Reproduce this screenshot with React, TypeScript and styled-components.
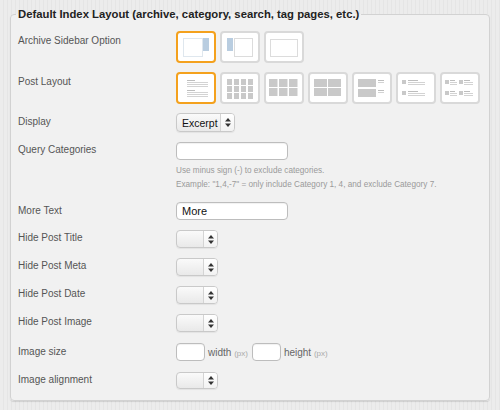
import React from "react"
import styled, {createGlobalStyle} from "styled-components"

const GlobalStyle = createGlobalStyle`
html, body {
  margin : 0;
  padding : 0;
}
body {
  width : 500px;
  height : 410px;
  overflow : hidden;
  font-family : "Liberation Sans", Arial, sans-serif;
  background : repeating-linear-gradient(90deg, #ececec 0px, #ececec 3px, #e5e5e5 3px, #e5e5e5 4px);
}
`

const Panel = styled.fieldset`
margin : 6px 0 0 10px;
width : 480px;
box-sizing : border-box;
border : 1px solid #d2d2d2;
border-radius : 4px;
background-color : #f1f1f1;
box-shadow : 0 1px 1px rgba(0,0,0,0.12);
padding : 9px 7px 11px 7px;
`

const Legend = styled.legend`
font-size : 11.3px;
line-height : 16px;
font-weight : bold;
color : #222;
padding : 0 2px;
margin-left : -2px;
`

interface rowProp {
  mt?: number;
}

const Row = styled.div<rowProp>`
display : grid;
grid-template-columns : 158px 1fr;
align-items : start;
margin-top : ${props => props.mt ?? 10}px;
&:first-of-type {
  margin-top : 0;
}
`

const Label = styled.div<{pad?: number}>`
font-size : 10px;
line-height : 14px;
color : #555;
padding-top : ${props => props.pad ?? 2}px;
`

// image option pickers
const Choices = styled.div`
display : flex;
gap : 4px;
`

const Choice = styled.div<{selected?: boolean}>`
width : 40px;
height : 32px;
box-sizing : border-box;
border : 2px solid ${props => props.selected ? "#f4a11d" : "#d9d9d9"};
border-radius : 4px;
background-color : #fff;
svg {
  display : block;
}
`

const Grid = ({xs, ys, w, h}: {xs: number[], ys: number[], w: number, h: number}) => (
  <>
    {ys.map(y => xs.map(x => <rect key={x + "-" + y} x={x} y={y} width={w} height={h} fill="#c9c9c9" />))}
  </>
)

const Lines = ({x, y, w, n, first}: {x: number, y: number, w: number, n: number, first?: number}) => (
  <>
    {Array.from({length: n}).map((_, i) => (
      <rect key={i} x={x} y={y + i * 2} width={i === 0 && first ? first : w} height={1} fill={i === 0 ? "#bdbdbd" : "#d3d3d3"} />
    ))}
  </>
)

const sidebarIcons = [
  <>
    <rect x={5.5} y={5.5} width={19} height={18} fill="#fff" stroke="#dfe7ee" />
    <rect x={25} y={5} width={6} height={13} fill="#b9cde0" />
  </>,
  <>
    <rect x={5} y={5} width={6} height={13} fill="#b9cde0" />
    <rect x={12.5} y={5.5} width={18} height={18} fill="#fff" stroke="#dcdcdc" />
  </>,
  <rect x={4.5} y={6.5} width={27} height={17} fill="#fff" stroke="#dcdcdc" />,
]

const postIcons = [
  <>
    <Lines x={9} y={6} w={21} n={4} first={8} />
    <Lines x={9} y={16} w={21} n={4} first={8} />
  </>,
  <Grid xs={[5, 12, 19, 26]} ys={[5, 12, 19]} w={5} h={6} />,
  <Grid xs={[3, 13, 23]} ys={[5, 14]} w={8.5} h={8} />,
  <Grid xs={[4, 18]} ys={[5, 14]} w={13} h={8} />,
  <>
    <Grid xs={[4]} ys={[5, 15]} w={18} h={8} />
    <Lines x={24} y={6} w={6} n={2} />
    <Lines x={24} y={16} w={6} n={2} />
  </>,
  <>
    <Grid xs={[4]} ys={[6, 17]} w={4} h={4} />
    <Lines x={10} y={6} w={17} n={3} first={10} />
    <Lines x={10} y={17} w={17} n={3} first={10} />
  </>,
  <>
    <Grid xs={[3, 17]} ys={[6, 17]} w={4} h={4} />
    <Lines x={8} y={6} w={7} n={3} first={5} />
    <Lines x={22} y={6} w={9} n={3} first={6} />
    <Lines x={8} y={17} w={7} n={3} first={5} />
    <Lines x={22} y={17} w={9} n={3} first={6} />
  </>,
]

const Picker = ({icons, selected}: {icons: React.ReactNode[], selected: number}) => (
  <Choices>
    {icons.map((icon, i) => (
      <Choice key={i} selected={i === selected}>
        <svg width="36" height="28" viewBox="0 0 36 28">{icon}</svg>
      </Choice>
    ))}
  </Choices>
)

// mac style select
const SelectBox = styled.div<{w: number, h?: number}>`
display : flex;
width : ${props => props.w}px;
height : ${props => props.h ?? 18}px;
box-sizing : border-box;
border : 1px solid #c9c9c9;
border-radius : 4px;
background : linear-gradient(#fafafa, #e9e9e9);
box-shadow : 0 1px 1px rgba(0,0,0,0.06);
overflow : hidden;
`

const SelectValue = styled.div`
flex : 1;
padding-left : 5px;
font-size : 10.5px;
display : flex;
align-items : center;
color : #111;
border-right : 1px solid #d4d4d4;
white-space : nowrap;
`

const SelectArrow = styled.div`
width : 13px;
display : flex;
align-items : center;
justify-content : center;
background : linear-gradient(#ffffff, #f2f2f2);
`

const Select = ({w, h, value}: {w: number, h?: number, value?: string}) => (
  <SelectBox w={w} h={h}>
    <SelectValue>{value}</SelectValue>
    <SelectArrow>
      <svg width="6" height="9" viewBox="0 0 6 9">
        <path d="M3 0 L6 3.5 L0 3.5 Z" fill="#333" />
        <path d="M0 5.5 L6 5.5 L3 9 Z" fill="#333" />
      </svg>
    </SelectArrow>
  </SelectBox>
)

const Input = styled.input<{w: number}>`
display : block;
width : ${props => props.w}px;
height : 18px;
box-sizing : border-box;
margin : 0;
border : 1px solid #bdbdbd;
border-radius : 4px;
background-color : #fff;
box-shadow : inset 0 1px 1px rgba(0,0,0,0.06);
padding : 0 5px;
font-family : "Liberation Sans", Arial, sans-serif;
font-size : 11px;
color : #111;
outline : none;
`

const Help = styled.div`
margin-top : 4px;
font-size : 8.2px;
line-height : 14px;
color : #9a9a9a;
`

const Inline = styled.div`
display : flex;
align-items : center;
gap : 3px;
`

const Unit = styled.span`
font-size : 10px;
color : #666;
margin-right : 1px;
small {
  font-size : 8px;
  color : #aaa;
}
`

function App() {
  return (
    <>
      <GlobalStyle />
      <Panel>
        <Legend>Default Index Layout (archive, category, search, tag pages, etc.)</Legend>
        <Row>
          <Label pad={3}>Archive Sidebar Option</Label>
          <Picker icons={sidebarIcons} selected={0} />
        </Row>
        <Row mt={9}>
          <Label pad={3}>Post Layout</Label>
          <Picker icons={postIcons} selected={0} />
        </Row>
        <Row mt={9}>
          <Label>Display</Label>
          <Select w={59} h={19} value="Excerpt" />
        </Row>
        <Row>
          <Label pad={1}>Query Categories</Label>
          <div>
            <Input w={112} />
            <Help>
              Use minus sign (-) to exclude categories.<br />
              Example: "1,4,-7" = only include Category 1, 4, and exclude Category 7.
            </Help>
          </div>
        </Row>
        <Row>
          <Label>More Text</Label>
          <Input w={112} defaultValue="More" />
        </Row>
        <Row>
          <Label pad={1}>Hide Post Title</Label>
          <Select w={42} />
        </Row>
        <Row>
          <Label pad={1}>Hide Post Meta</Label>
          <Select w={42} />
        </Row>
        <Row>
          <Label pad={1}>Hide Post Date</Label>
          <Select w={42} />
        </Row>
        <Row>
          <Label pad={1}>Hide Post Image</Label>
          <Select w={42} />
        </Row>
        <Row mt={11}>
          <Label>Image size</Label>
          <Inline>
            <Input w={29} />
            <Unit>width <small>(px)</small></Unit>
            <Input w={29} />
            <Unit>height <small>(px)</small></Unit>
          </Inline>
        </Row>
        <Row mt={11}>
          <Label pad={1}>Image alignment</Label>
          <Select w={42} h={17} />
        </Row>
      </Panel>
    </>
  )
}

export default App;
